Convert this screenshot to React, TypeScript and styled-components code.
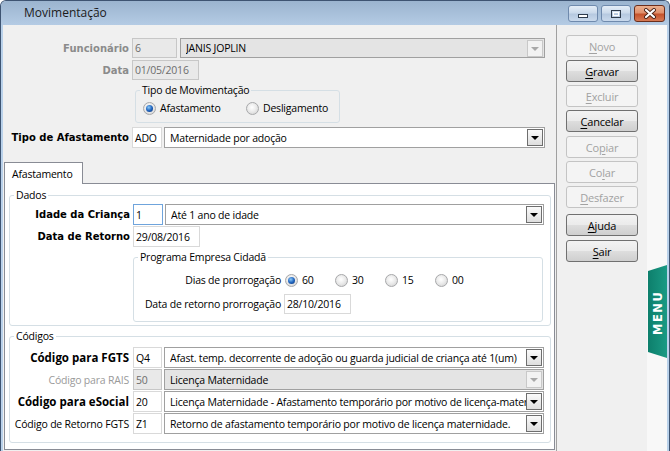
import React from 'react';
import styled, { createGlobalStyle, css } from 'styled-components';

const GlobalStyle = createGlobalStyle`
  html, body { margin: 0; padding: 0; background: #ffffff; }
  body {
    font-family: 'Segoe UI', 'Open Sans', sans-serif;
    font-size: 10.5px;
    letter-spacing: -0.2px;
    color: #000;
  }
  * { box-sizing: border-box; }
`;

const Window = styled.div`
  width: 670px;
  height: 451px;
  display: flex;
  flex-direction: column;
  background: #b9d1ea;
  border: 1px solid #3e5472;
  border-bottom: none;
  border-radius: 6px 6px 0 0;
  overflow: hidden;
`;

const TitleBar = styled.div`
  height: 24px;
  flex: none;
  display: flex;
  align-items: flex-start;
  padding: 0 4px 0 23px;
  background: linear-gradient(#9bb4cf, #b4cbe4);
`;

const Title = styled.span`
  font-size: 12px;
  letter-spacing: 0;
  line-height: 24px;
  color: #1b1b1b;
`;

const Controls = styled.div`
  margin-left: auto;
  margin-top: 4px;
  display: flex;
  gap: 3px;
`;

const CtlButton = styled.div<{ $close?: boolean }>`
  width: ${p => (p.$close ? 31 : 30)}px;
  height: 17px;
  border: 1px solid ${p => (p.$close ? '#6b2e1c' : '#6f8aad')};
  border-radius: 3px;
  display: flex;
  align-items: center;
  justify-content: center;
  background: ${p =>
    p.$close
      ? 'linear-gradient(#eab08f 0%, #e0906c 45%, #c5532c 55%, #d77a55 100%)'
      : 'linear-gradient(#e4edf7 0%, #cbdaeb 45%, #b6c9e0 55%, #c9d9ec 100%)'};
`;

const Body = styled.div`
  flex: 1;
  display: flex;
  margin: 0 2px;
  background: #f0f0f0;
  min-height: 0;
`;

const Pane = styled.div`
  width: 554px;
  flex: none;
  border-right: 1px solid #a0a0a0;
  padding-top: 13px;
  display: flex;
  flex-direction: column;
`;

const Row = styled.div<{ $mt?: number; $h?: number; $pr?: number; $pl?: number }>`
  display: flex;
  align-items: center;
  flex: none;
  height: ${p => p.$h ?? 21}px;
  margin-top: ${p => p.$mt ?? 0}px;
  padding-right: ${p => p.$pr ?? 0}px;
  padding-left: ${p => p.$pl ?? 0}px;
`;

const Label = styled.span<{ $w: number; $gap?: number; $bold?: boolean; $tahoma?: boolean; $muted?: string }>`
  width: ${p => p.$w}px;
  flex: none;
  text-align: right;
  margin-right: ${p => p.$gap ?? 3}px;
  white-space: nowrap;
  color: ${p => p.$muted ?? '#000'};
  font-weight: ${p => (p.$bold ? 700 : 400)};
  ${p =>
    p.$tahoma &&
    css`
      font-family: 'DejaVu Sans', Verdana, sans-serif;
      font-size: 10px;
      letter-spacing: 0;
    `}
  ${p =>
    p.$bold &&
    !p.$tahoma &&
    css`
      font-size: 11.5px;
      letter-spacing: 0;
    `}
`;

const TextBox = styled.div<{ $w: number; $gap?: number; $state?: 'normal' | 'disabled' | 'focus' }>`
  width: ${p => p.$w}px;
  height: 100%;
  flex: none;
  margin-right: ${p => p.$gap ?? 0}px;
  display: flex;
  align-items: center;
  padding: 0 2px;
  white-space: nowrap;
  overflow: hidden;
  background: ${p => (p.$state === 'disabled' ? '#e9e9e9' : '#fff')};
  color: ${p => (p.$state === 'disabled' ? '#6d6d6d' : '#000')};
  border: 1px solid
    ${p => (p.$state === 'focus' ? '#6fa4dc' : p.$state === 'disabled' ? '#c7c7c7' : '#d9d9d9')};
`;

const Combo = styled.div<{ $disabled?: boolean }>`
  flex: 1;
  height: 100%;
  min-width: 0;
  display: flex;
  align-items: center;
  padding: 0 1px 0 5px;
  border: 1px solid #a0a0a0;
  background: ${p => (p.$disabled ? '#e4e4e4' : '#fff')};
`;

const ComboText = styled.span`
  flex: 1;
  min-width: 0;
  overflow: hidden;
  white-space: nowrap;
`;

const ComboArrow = styled.span<{ $disabled?: boolean }>`
  width: 16px;
  height: 17px;
  flex: none;
  display: flex;
  align-items: center;
  justify-content: center;
  border: 1px solid ${p => (p.$disabled ? '#c8c8c8' : '#6e6e6e')};
  background: ${p => (p.$disabled ? '#f2f2f2' : 'linear-gradient(#fafafa, #dedede)')};
  &::after {
    content: '';
    border-left: 4px solid transparent;
    border-right: 4px solid transparent;
    border-top: 4px solid ${p => (p.$disabled ? '#a8a8a8' : '#000')};
    margin-top: 1px;
  }
`;

const Group = styled.fieldset<{ $ml: number; $mr?: number; $w?: number; $pb: number; $mt?: number }>`
  margin: ${p => p.$mt ?? 0}px ${p => p.$mr ?? 0}px 0 ${p => p.$ml}px;
  ${p => p.$w !== undefined && css`width: ${p.$w}px;`}
  min-width: 0;
  padding: 0 0 ${p => p.$pb}px 0;
  border: 1px solid #d5dfe5;
  border-radius: 3px;
  flex: none;
`;

const Legend = styled.legend`
  margin-left: 4px;
  padding: 0 2px;
  line-height: 16px;
`;

const RadioGroup = styled.div<{ $w: number }>`
  width: ${p => p.$w}px;
  flex: none;
  display: flex;
  align-items: center;
  gap: 4px;
`;

const RadioDot = styled.span<{ $checked?: boolean }>`
  width: 13px;
  height: 13px;
  flex: none;
  border-radius: 50%;
  border: 1px solid #a7a8aa;
  display: flex;
  align-items: center;
  justify-content: center;
  background: radial-gradient(circle at 45% 40%, #ffffff 0%, #ececec 45%, #cdcdcd 100%);
  ${p =>
    p.$checked &&
    css`
      &::after {
        content: '';
        width: 7px;
        height: 7px;
        border-radius: 50%;
        background: radial-gradient(circle at 40% 35%, #8ccaf7 0%, #2266c0 50%, #0b2f6e 100%);
      }
    `}
`;

const TabHeader = styled.div`
  margin: 14px 0 -1px 1px;
  width: 79px;
  height: 22px;
  flex: none;
  border: 1px solid #898c95;
  border-bottom: none;
  background: #fff;
  display: flex;
  align-items: center;
  padding-left: 7px;
  position: relative;
  z-index: 1;
`;

const TabPanel = styled.div`
  margin: 0 1px;
  height: 267px;
  flex: none;
  border: 1px solid #898c95;
  background: #fff;
  padding-top: 3px;
  display: flex;
  flex-direction: column;
  gap: 2px;
`;

const ButtonColumn = styled.div`
  width: 90px;
  flex: none;
  padding: 10px 0 0 9px;
  display: flex;
  flex-direction: column;
`;

const Btn = styled.div<{ $disabled?: boolean; $mt?: number }>`
  width: 72px;
  height: 22px;
  flex: none;
  margin-top: ${p => p.$mt ?? 3}px;
  display: flex;
  align-items: center;
  justify-content: center;
  border-radius: 3px;
  border: 1px solid ${p => (p.$disabled ? '#c4c4c4' : '#707070')};
  color: ${p => (p.$disabled ? '#a2a2a2' : '#000')};
  background: ${p =>
    p.$disabled
      ? '#f4f4f4'
      : 'linear-gradient(#f3f3f3 0%, #ebebeb 48%, #dddddd 52%, #cfcfcf 100%)'};
  font-size: 11px;
  u { text-decoration-thickness: 1px; text-underline-offset: 2px; }
`;

const MenuStrip = styled.div`
  flex: 1;
  background: #f8f8f8;
  padding-top: 240px;
  display: flex;
  justify-content: flex-end;
`;

const WinIcon = ({ kind }: { kind: 'min' | 'max' | 'close' }) => {
  if (kind === 'min')
    return (
      <svg width="12" height="10" viewBox="0 0 12 10">
        <rect x="1.5" y="5.5" width="9" height="3" fill="#fff" stroke="#2f3c4d" />
      </svg>
    );
  if (kind === 'max')
    return (
      <svg width="12" height="10" viewBox="0 0 12 10">
        <rect x="1.5" y="1.5" width="9" height="7" fill="none" stroke="#2f3c4d" />
        <rect x="3.5" y="3.5" width="5" height="3" fill="none" stroke="#fff" />
      </svg>
    );
  return (
    <svg width="14" height="11" viewBox="0 0 14 11">
      <path d="M3 2 L11 9 M11 2 L3 9" stroke="#4a2418" strokeWidth="4" strokeLinecap="round" />
      <path d="M3 2 L11 9 M11 2 L3 9" stroke="#fff" strokeWidth="2.2" strokeLinecap="round" />
    </svg>
  );
};

const MenuTab = () => (
  <svg width="19" height="94" viewBox="0 0 19 94">
    <defs>
      <linearGradient id="menuGrad" x1="0" y1="0" x2="1" y2="0">
        <stop offset="0" stopColor="#0d7f6c" />
        <stop offset="1" stopColor="#1a9a84" />
      </linearGradient>
    </defs>
    <polygon points="0,6 19,0 19,93 0,87" fill="url(#menuGrad)" />
    <text
      x="0"
      y="0"
      transform="translate(14 70) rotate(-90)"
      fill="#fff"
      fontFamily="'DejaVu Sans', sans-serif"
      fontWeight="700"
      fontSize="11.5"
      letterSpacing="1.5"
    >
      MENU
    </text>
  </svg>
);

const buttons: { label: React.ReactNode; disabled?: boolean; mt?: number }[] = [
  { label: <><u>N</u>ovo</>, disabled: true, mt: 0 },
  { label: <><u>G</u>ravar</> },
  { label: <><u>E</u>xcluir</>, disabled: true },
  { label: <><u>C</u>ancelar</> },
  { label: <>Co<u>p</u>iar</>, disabled: true, mt: 4 },
  { label: <>Co<u>l</u>ar</>, disabled: true },
  { label: <><u>D</u>esfazer</>, disabled: true },
  { label: <><u>A</u>juda</>, mt: 6 },
  { label: <><u>S</u>air</>, mt: 4 },
];

const codigos = [
  { label: 'Código para FGTS', bold: true, code: 'Q4', text: 'Afast. temp. decorrente de adoção ou guarda judicial de criança até 1(um)' },
  { label: 'Código para RAIS', muted: '#9a9a9a', code: '50', text: 'Licença Maternidade', disabled: true },
  { label: 'Código para eSocial', bold: true, code: '20', text: 'Licença Maternidade - Afastamento temporário por motivo de licença-maternidade' },
  { label: 'Código de Retorno FGTS', code: 'Z1', text: 'Retorno de afastamento temporário por motivo de licença maternidade.' },
];

const dias = ['60', '30', '15', '00'];

export default function App() {
  return (
    <>
      <GlobalStyle />
      <Window>
        <TitleBar>
          <Title>Movimentação</Title>
          <Controls>
            <CtlButton><WinIcon kind="min" /></CtlButton>
            <CtlButton><WinIcon kind="max" /></CtlButton>
            <CtlButton $close><WinIcon kind="close" /></CtlButton>
          </Controls>
        </TitleBar>
        <Body>
          <Pane>
            <Row $h={20} $pr={11}>
              <Label $w={126} $bold $tahoma $muted="#8b8b8b">Funcionário</Label>
              <TextBox $w={45} $gap={3} $state="disabled">6</TextBox>
              <Combo $disabled>
                <ComboText>JANIS JOPLIN</ComboText>
                <ComboArrow $disabled />
              </Combo>
            </Row>
            <Row $h={20} $mt={2}>
              <Label $w={126} $bold $tahoma $muted="#8b8b8b">Data</Label>
              <TextBox $w={67} $state="disabled">01/05/2016</TextBox>
            </Row>
            <Group $ml={132} $w={205} $pb={4} $mt={2}>
              <Legend>Tipo de Movimentação</Legend>
              <Row $h={20} $pl={7}>
                <RadioGroup $w={103}>
                  <RadioDot $checked />
                  <span>Afastamento</span>
                </RadioGroup>
                <RadioGroup $w={90}>
                  <RadioDot />
                  <span>Desligamento</span>
                </RadioGroup>
              </Row>
            </Group>
            <Row $h={21} $mt={4} $pr={11}>
              <Label $w={126} $bold $tahoma>Tipo de Afastamento</Label>
              <TextBox $w={30} $gap={2}>ADO</TextBox>
              <Combo>
                <ComboText>Maternidade por adoção</ComboText>
                <ComboArrow />
              </Combo>
            </Row>
            <TabHeader>Afastamento</TabHeader>
            <TabPanel>
              <Group $ml={4} $mr={3} $pb={3}>
                <Legend>Dados</Legend>
                <Row $h={21} $mt={1} $pr={6}>
                  <Label $w={120} $bold $tahoma>Idade da Criança</Label>
                  <TextBox $w={30} $gap={2} $state="focus">1</TextBox>
                  <Combo>
                    <ComboText>Até 1 ano de idade</ComboText>
                    <ComboArrow />
                  </Combo>
                </Row>
                <Row $h={21} $mt={1}>
                  <Label $w={120} $bold $tahoma>Data de Retorno</Label>
                  <TextBox $w={67}>29/08/2016</TextBox>
                </Row>
                <Group $ml={123} $w={410} $pb={7} $mt={2}>
                  <Legend>Programa Empresa Cidadã</Legend>
                  <Row $h={20} $mt={5}>
                    <Label $w={147} $gap={4}>Dias de prorrogação</Label>
                    {dias.map((d, i) => (
                      <RadioGroup key={d} $w={50}>
                        <RadioDot $checked={i === 0} />
                        <span>{d}</span>
                      </RadioGroup>
                    ))}
                  </Row>
                  <Row $h={20} $mt={4}>
                    <Label $w={147} $gap={3}>Data de retorno prorrogação</Label>
                    <TextBox $w={67}>28/10/2016</TextBox>
                  </Row>
                </Group>
              </Group>
              <Group $ml={4} $mr={3} $pb={8}>
                <Legend>Códigos</Legend>
                {codigos.map((c, i) => (
                  <Row key={c.code} $h={21} $mt={i === 0 ? 3 : 1} $pr={6}>
                    <Label $w={119} $gap={4} $bold={c.bold} $muted={c.muted}>
                      {c.label}
                    </Label>
                    <TextBox $w={29} $gap={2} $state={c.disabled ? 'disabled' : 'normal'}>
                      {c.code}
                    </TextBox>
                    <Combo $disabled={c.disabled}>
                      <ComboText>{c.text}</ComboText>
                      <ComboArrow $disabled={c.disabled} />
                    </Combo>
                  </Row>
                ))}
              </Group>
            </TabPanel>
          </Pane>
          <ButtonColumn>
            {buttons.map((b, i) => (
              <Btn key={i} $disabled={b.disabled} $mt={b.mt}>
                <span>{b.label}</span>
              </Btn>
            ))}
          </ButtonColumn>
          <MenuStrip>
            <MenuTab />
          </MenuStrip>
        </Body>
      </Window>
    </>
  );
}
